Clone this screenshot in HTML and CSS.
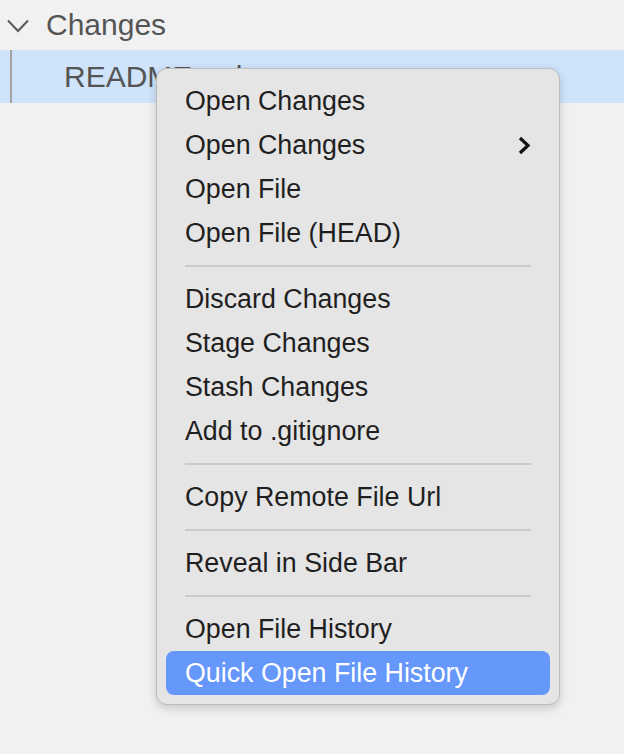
FILE: index.html
```html
<!DOCTYPE html>
<html lang="en">
<head>
    <meta charset="UTF-8">
    <title>Changes</title>
    <link rel="stylesheet" href="styles.css">
</head>
<body>
<div class="tree">
    <div class="section-header">
        <svg class="twistie" width="22" height="14" viewBox="0 0 22 14">
            <path d="M1 1.5 L11 12 L21 1.5" fill="none" stroke="#595959" stroke-width="2"/>
        </svg>
        <span class="section-title">Changes</span>
    </div>
    <div class="file-row">
        <div class="indent-guide"></div>
        <span class="file-name">README.md</span>
    </div>
</div>

<div class="context-menu">
    <div class="menu-item">Open Changes</div>
    <div class="menu-item submenu">
        <span>Open Changes</span>
        <svg class="arrow" width="13" height="19" viewBox="0 0 13 19">
            <path d="M2 2 L10 9.5 L2 17" fill="none" stroke="#111" stroke-width="3.2"/>
        </svg>
    </div>
    <div class="menu-item">Open File</div>
    <div class="menu-item">Open File (HEAD)</div>
    <div class="separator"></div>
    <div class="menu-item">Discard Changes</div>
    <div class="menu-item">Stage Changes</div>
    <div class="menu-item">Stash Changes</div>
    <div class="menu-item">Add to .gitignore</div>
    <div class="separator"></div>
    <div class="menu-item">Copy Remote File Url</div>
    <div class="separator"></div>
    <div class="menu-item">Reveal in Side Bar</div>
    <div class="separator"></div>
    <div class="menu-item">Open File History</div>
    <div class="menu-item active">Quick Open File History</div>
</div>
</body>
</html>
```

FILE: styles.css
```css
body {
    margin: 0;
    background: #f1f1f1;
    font-family: "Liberation Sans", Arial, sans-serif;
}
.tree {
    width: 624px;
}
.section-header {
    display: flex;
    align-items: center;
    height: 50px;
    line-height: 50px;
    color: #555;
    font-size: 30px;
}
.twistie {
    margin-left: 7px;
    margin-top: 2px;
}
.section-title {
    margin-left: 17px;
}
.file-row {
    display: flex;
    height: 53px;
    line-height: 53px;
    background: #cfe4fb;
    color: #555;
    font-size: 30px;
}
.indent-guide {
    margin-left: 10px;
    width: 2px;
    background: #a2a2a2;
}
.file-name {
    margin-left: 52px;
}
.context-menu {
    position: absolute;
    top: 68px;
    left: 156px;
    width: 404px;
    height: 637px;
    box-sizing: border-box;
    padding: 10px 9px 9px 9px;
    background: #e5e5e5;
    border: 1px solid #bdbdbd;
    border-radius: 11px;
    box-shadow: 0 3px 10px rgba(0, 0, 0, 0.18);
    font-size: 26.8px;
    color: #1f1f1f;
}
.menu-item {
    height: 44px;
    line-height: 44px;
    padding: 0 19px 0 19px;
    border-radius: 8px;
    white-space: nowrap;
}
.submenu {
    display: flex;
    justify-content: space-between;
    align-items: center;
}
.arrow {
    margin-top: 1px;
}
.menu-item.active {
    background: #6697fb;
    color: #fff;
}
.separator {
    height: 2px;
    margin: 10px 19px;
    background: #cacaca;
}
```
